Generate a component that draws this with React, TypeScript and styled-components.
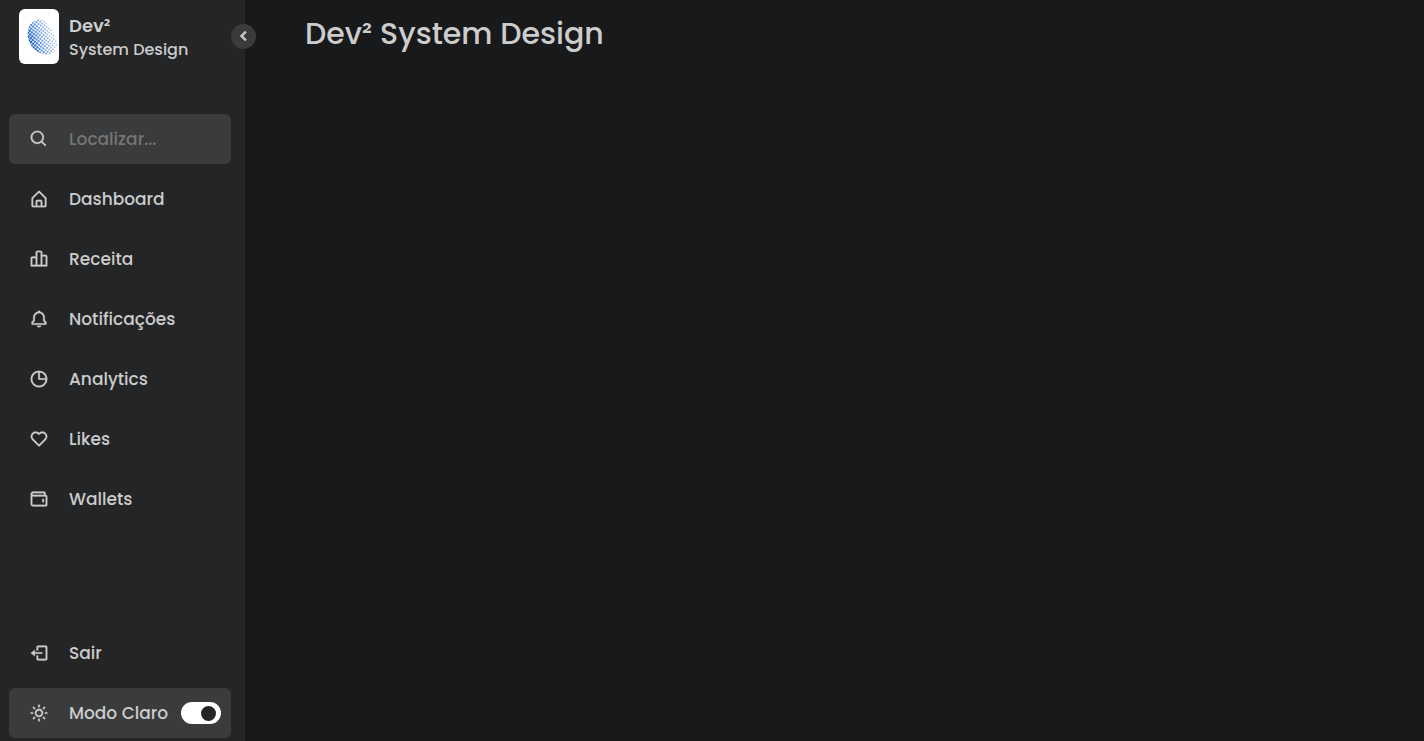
import React from "react";
import styled, { createGlobalStyle } from "styled-components";
import {
  BiSearch, BiHomeAlt, BiBarChartAlt2, BiBell, BiPieChartAlt, BiHeart, BiWallet,
  BiLogOut, BiSun, BiChevronLeft,
} from "react-icons/bi";

const GlobalStyle = createGlobalStyle`
  * { margin: 0; padding: 0; box-sizing: border-box; }
  body {
    height: 100vh;
    overflow: hidden;
    background: #18191a;
    color: #ccc;
    font-family: Poppins, Inter, "Open Sans", sans-serif;
  }
`;

const Layout = styled.div`
  display: flex;
  height: 100vh;
`;

const Sidebar = styled.nav`
  position: relative;
  display: flex;
  flex-direction: column;
  width: 245px;
  height: 100vh;
  padding: 9px 14px 3px 9px;
  background: #242526;
`;

const Brand = styled.header`
  display: flex;
  align-items: flex-start;
  height: 55px;
  padding-left: 10px;
  gap: 10px;
`;

const LogoBox = styled.div`
  width: 40px;
  height: 55px;
  border-radius: 6px;
  background: #fff;
  overflow: hidden;
`;

const BrandText = styled.div`
  display: flex;
  flex-direction: column;
  padding-top: 5px;
`;

const Label = styled.span<{ $size?: number; $weight?: number; $line?: number }>`
  font-size: ${(p) => p.$size ?? 17}px;
  font-weight: ${(p) => p.$weight ?? 500};
  line-height: ${(p) => p.$line ?? 24}px;
  white-space: nowrap;
`;

const Toggle = styled.button`
  position: absolute;
  top: 23.5px;
  right: -11px;
  display: flex;
  align-items: center;
  justify-content: center;
  width: 25px;
  height: 25px;
  padding-bottom: 1px;
  border: 0;
  border-radius: 50%;
  background: #3a3b3c;
  color: #ccc;
  font-size: 20px;

  svg {
    stroke: currentColor;
    stroke-width: 1.1;
  }
`;

const Row = styled.div<{ $filled?: boolean }>`
  display: flex;
  align-items: center;
  height: 50px;
  border-radius: 6px;
  background: ${(p) => (p.$filled ? "#3a3b3c" : "transparent")};
`;

const IconSlot = styled.span`
  display: flex;
  align-items: center;
  justify-content: center;
  width: 60px;
  font-size: 20px;

  svg {
    stroke: currentColor;
    stroke-width: 0.25;
  }
`;

const SearchInput = styled.input`
  width: 150px;
  border: 0;
  outline: 0;
  background: transparent;
  color: #ccc;
  font-family: inherit;
  font-size: 17px;
  font-weight: 500;

  &::placeholder {
    color: #757575;
  }
`;

const Menu = styled.div`
  display: flex;
  flex-direction: column;
  gap: 10px;
  margin-top: 50px;
`;

const Bottom = styled(Menu)`
  margin-top: auto;
`;

const Switch = styled.span`
  display: flex;
  align-items: center;
  justify-content: flex-end;
  width: 40px;
  height: 22px;
  margin: 0 10px 0 auto;
  padding-right: 5px;
  border-radius: 25px;
  background: #fff;

  &::before {
    content: "";
    width: 15px;
    height: 15px;
    border-radius: 50%;
    background: #242526;
  }
`;

const Main = styled.main`
  flex: 1;
  padding: 11px 60px;
`;

// Halftone globe: a tilted lattice of dots that shrink and fade to the right.
function Globe() {
  const dots: React.ReactNode[] = [];
  const step = 2.7;
  const angle = 0.67;
  for (let i = -14; i <= 14; i++) {
    for (let j = -14; j <= 14; j++) {
      const x = 23 + step * (i * Math.cos(angle) - j * Math.sin(angle));
      const y = 28 + step * (i * Math.sin(angle) + j * Math.cos(angle));
      if (x < 7 || x > 39 || y < 9 || y > 47) continue;
      const fade = Math.max(0, Math.min(1, (x - 9 - (y - 28) * 0.3) / 24));
      dots.push(
        <circle key={`${i}:${j}`} cx={x} cy={y} r={1.3 - fade * 0.45} opacity={1 - fade * 0.6} />
      );
    }
  }
  return (
    <svg width="40" height="55" fill="#1f69c8">
      <clipPath id="globe">
        <path d="M19 10.5C12 12 8.7 18 8.7 25.5C9 36.5 17.5 45.6 30 45.6C35 45 38 40 38 34C36 26 30 14 23.5 11C22 10.3 20.5 10.2 19 10.5Z" />
      </clipPath>
      <g clipPath="url(#globe)">{dots}</g>
    </svg>
  );
}

const items = [
  { label: "Dashboard", Icon: BiHomeAlt },
  { label: "Receita", Icon: BiBarChartAlt2 },
  { label: "Notificações", Icon: BiBell },
  { label: "Analytics", Icon: BiPieChartAlt },
  { label: "Likes", Icon: BiHeart },
  { label: "Wallets", Icon: BiWallet },
];

export default function App() {
  return (
    <Layout>
      <GlobalStyle />
      <Sidebar>
        <Brand>
          <LogoBox><Globe /></LogoBox>
          <BrandText>
            <Label $size={18} $weight={600} $line={23}>Dev²</Label>
            <Label $size={16} $line={25}>System Design</Label>
          </BrandText>
        </Brand>
        <Toggle aria-label="Menu"><BiChevronLeft /></Toggle>
        <Menu>
          <Row $filled>
            <IconSlot><BiSearch /></IconSlot>
            <SearchInput placeholder="Localizar..." />
          </Row>
          {items.map(({ label, Icon }) => (
            <Row key={label}>
              <IconSlot><Icon /></IconSlot>
              <Label>{label}</Label>
            </Row>
          ))}
        </Menu>
        <Bottom>
          <Row>
            <IconSlot><BiLogOut /></IconSlot>
            <Label>Sair</Label>
          </Row>
          <Row $filled>
            <IconSlot><BiSun /></IconSlot>
            <Label>Modo Claro</Label>
            <Switch />
          </Row>
        </Bottom>
      </Sidebar>
      <Main>
        <Label as="h1" $size={30} $line={45}>Dev² System Design</Label>
      </Main>
    </Layout>
  );
}
